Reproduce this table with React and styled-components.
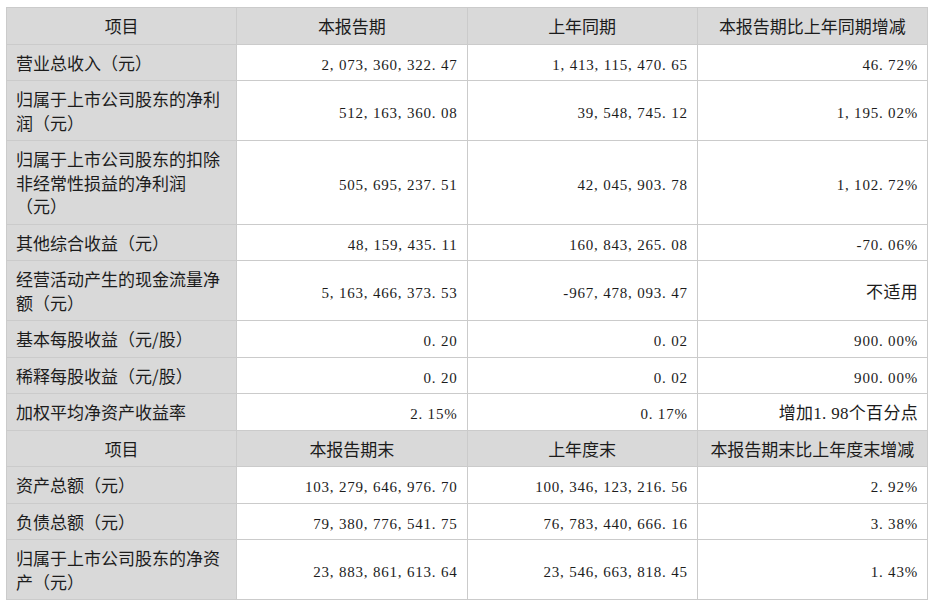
import React from 'react';
import styled, { createGlobalStyle } from 'styled-components';

const GlobalStyle = createGlobalStyle`
  body {
    margin: 0;
    background: #ffffff;
  }
`;

const Page = styled.div`
  padding: 7px 0 0 6px;
  font-family: "Noto Sans CJK SC", sans-serif;
  color: #1c1c1c;
`;

const Table = styled.table`
  width: 922px;
  border-collapse: collapse;
  table-layout: fixed;
  border: 1px solid #c9c9c9;
`;

const Cell = styled.td`
  border: 1px solid #cbcbcb;
  padding: 6px 9px;
  font-size: 17px;
  line-height: 23.5px;
  vertical-align: middle;
  background: ${p => (p.$shade ? '#d9d9d9' : '#ffffff')};
  text-align: ${p => p.$align || 'left'};
`;

const Num = styled.span`
  font-family: "Liberation Serif", "Noto Sans CJK SC", serif;
  font-size: 15px;
  line-height: 1;
  letter-spacing: 0.8px;
`;

const Mixed = styled.span`
  font-family: "Liberation Serif", "Noto Sans CJK SC", serif;
  font-size: 17px;
  line-height: 1;
  letter-spacing: 0.3px;
`;

const firstHead = ['项目', '本报告期', '上年同期', '本报告期比上年同期增减'];
const secondHead = ['项目', '本报告期末', '上年度末', '本报告期末比上年度末增减'];

const firstRows = [
  ['营业总收入（元）', '2, 073, 360, 322. 47', '1, 413, 115, 470. 65', '46. 72%'],
  ['归属于上市公司股东的净利润（元）', '512, 163, 360. 08', '39, 548, 745. 12', '1, 195. 02%'],
  ['归属于上市公司股东的扣除非经常性损益的净利润（元）', '505, 695, 237. 51', '42, 045, 903. 78', '1, 102. 72%'],
  ['其他综合收益（元）', '48, 159, 435. 11', '160, 843, 265. 08', '-70. 06%'],
  ['经营活动产生的现金流量净额（元）', '5, 163, 466, 373. 53', '-967, 478, 093. 47', '不适用'],
  ['基本每股收益（元/股）', '0. 20', '0. 02', '900. 00%'],
  ['稀释每股收益（元/股）', '0. 20', '0. 02', '900. 00%'],
  ['加权平均净资产收益率', '2. 15%', '0. 17%', '增加1. 98个百分点'],
];

const secondRows = [
  ['资产总额（元）', '103, 279, 646, 976. 70', '100, 346, 123, 216. 56', '2. 92%'],
  ['负债总额（元）', '79, 380, 776, 541. 75', '76, 783, 440, 666. 16', '3. 38%'],
  ['归属于上市公司股东的净资产（元）', '23, 883, 861, 613. 64', '23, 546, 663, 818. 45', '1. 43%'],
];

const ValueText = ({ value }) =>
  /^[-0-9., %]+$/.test(value) ? <Num>{value}</Num> : <Mixed>{value}</Mixed>;

const HeadRow = ({ labels }) => (
  <tr>
    {labels.map(l => (
      <Cell key={l} $shade $align="center">{l}</Cell>
    ))}
  </tr>
);

const DataRow = ({ row }) => (
  <tr>
    <Cell $shade>
      {row[0].startsWith('归属于上市公司股东的扣除')
        ? <>归属于上市公司股东的扣除非经常性损益的净利润<br />（元）</>
        : row[0]}
    </Cell>
    {row.slice(1).map((v, i) => (
      <Cell key={i} $align="right"><ValueText value={v} /></Cell>
    ))}
  </tr>
);

export default function App() {
  return (
    <Page>
      <GlobalStyle />
      <Table>
        <tbody>
          <HeadRow labels={firstHead} />
          {firstRows.map(r => <DataRow key={r[0]} row={r} />)}
          <HeadRow labels={secondHead} />
          {secondRows.map(r => <DataRow key={r[0]} row={r} />)}
        </tbody>
      </Table>
    </Page>
  );
}
